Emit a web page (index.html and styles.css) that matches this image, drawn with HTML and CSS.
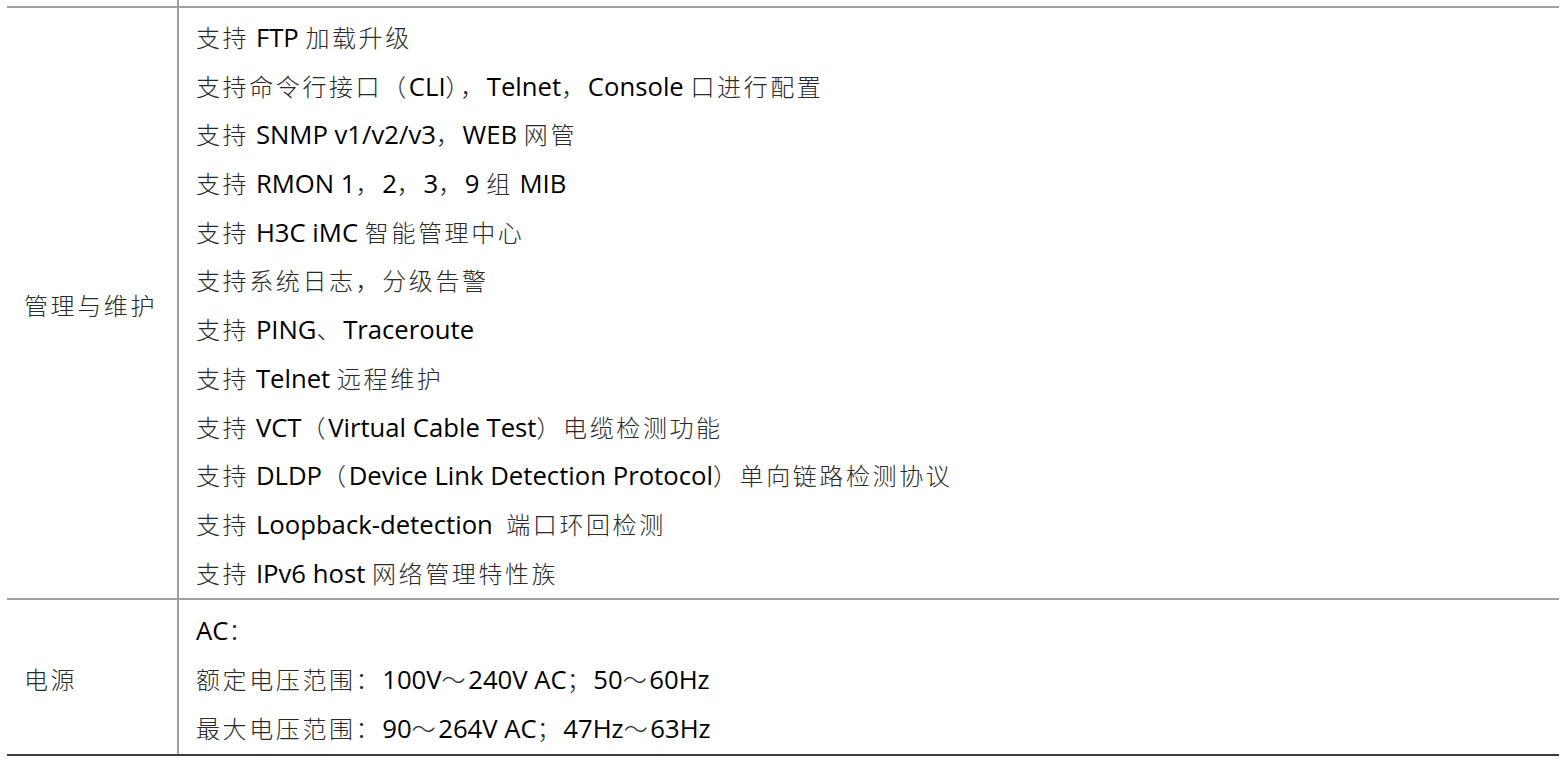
FILE: index.html
```html
<!DOCTYPE html>
<html lang="zh-CN">
<head>
    <meta charset="UTF-8">
    <title>管理与维护 / 电源</title>
    <link rel="stylesheet" href="styles.css">
</head>
<body>
    <table class="spec-table">
        <tr class="cut-row">
            <td class="label"></td>
            <td class="value"></td>
        </tr>
        <tr>
            <td class="label"><span class="zh">管理与维护</span></td>
            <td class="value">
                <div class="line"><span class="zh">支持</span> FTP <span class="zh">加载升级</span></div>
                <div class="line"><span class="zh">支持命令行接口（</span>CLI<span class="zh">），</span>Telnet<span class="zh">，</span>Console <span class="zh">口进行配置</span></div>
                <div class="line"><span class="zh">支持</span> SNMP v1/v2/v3<span class="zh">，</span>WEB <span class="zh">网管</span></div>
                <div class="line"><span class="zh">支持</span> RMON 1<span class="zh">，</span>2<span class="zh">，</span>3<span class="zh">，</span>9 <span class="zh">组</span> MIB</div>
                <div class="line"><span class="zh">支持</span> H3C iMC <span class="zh">智能管理中心</span></div>
                <div class="line"><span class="zh">支持系统日志，分级告警</span></div>
                <div class="line"><span class="zh">支持</span> PING<span class="zh">、</span>Traceroute</div>
                <div class="line"><span class="zh">支持</span> Telnet <span class="zh">远程维护</span></div>
                <div class="line"><span class="zh">支持</span> VCT<span class="zh">（</span>Virtual Cable Test<span class="zh">）电缆检测功能</span></div>
                <div class="line"><span class="zh">支持</span> DLDP<span class="zh">（</span>Device Link Detection Protocol<span class="zh">）单向链路检测协议</span></div>
                <div class="line"><span class="zh">支持</span> Loopback-detection&nbsp; <span class="zh">端口环回检测</span></div>
                <div class="line"><span class="zh">支持</span> IPv6 host <span class="zh">网络管理特性族</span></div>
            </td>
        </tr>
        <tr class="last-row">
            <td class="label"><span class="zh">电源</span></td>
            <td class="value">
                <div class="line">AC<span class="zh">：</span></div>
                <div class="line"><span class="zh">额定电压范围：</span>100V<span class="zh">～</span>240V AC<span class="zh">；</span>50<span class="zh">～</span>60Hz</div>
                <div class="line"><span class="zh">最大电压范围：</span>90<span class="zh">～</span>264V AC<span class="zh">；</span>47Hz<span class="zh">～</span>63Hz</div>
            </td>
        </tr>
    </table>
</body>
</html>
```

FILE: styles.css
```css
body {
    margin: 0;
    background: #fff;
    font-family: "Open Sans", "Noto Sans CJK SC", sans-serif;
    font-size: 25.7px;
    color: #000;
}
.spec-table {
    margin-left: 7px;
    width: 1552px;
    border-collapse: collapse;
}
.spec-table td {
    padding: 0;
    border-top: 2px solid #a0a0a0;
}
.spec-table td.label {
    width: 153px;
    padding-left: 17px;
    border-right: 2px solid #a0a0a0;
    vertical-align: middle;
    line-height: 30px;
    padding-top: 6px;
}
.spec-table td.value {
    padding: 6px 0 0 17px;
    vertical-align: top;
}
.cut-row td {
    border-top: none;
    height: 6px;
    padding: 0 !important;
}
.last-row td {
    border-bottom: 2px solid #3a3a3a;
}
.last-row td.value {
    padding-top: 7px;
    padding-bottom: 1px;
}
.line {
    height: 48.7px;
    line-height: 48.7px;
    white-space: nowrap;
}
.zh {
    font-family: "Noto Sans CJK SC", sans-serif;
    font-size: 24px;
    font-weight: 300;
    line-height: 1;
    letter-spacing: 2.6px;
    color: #2a2a2a;
}
```
